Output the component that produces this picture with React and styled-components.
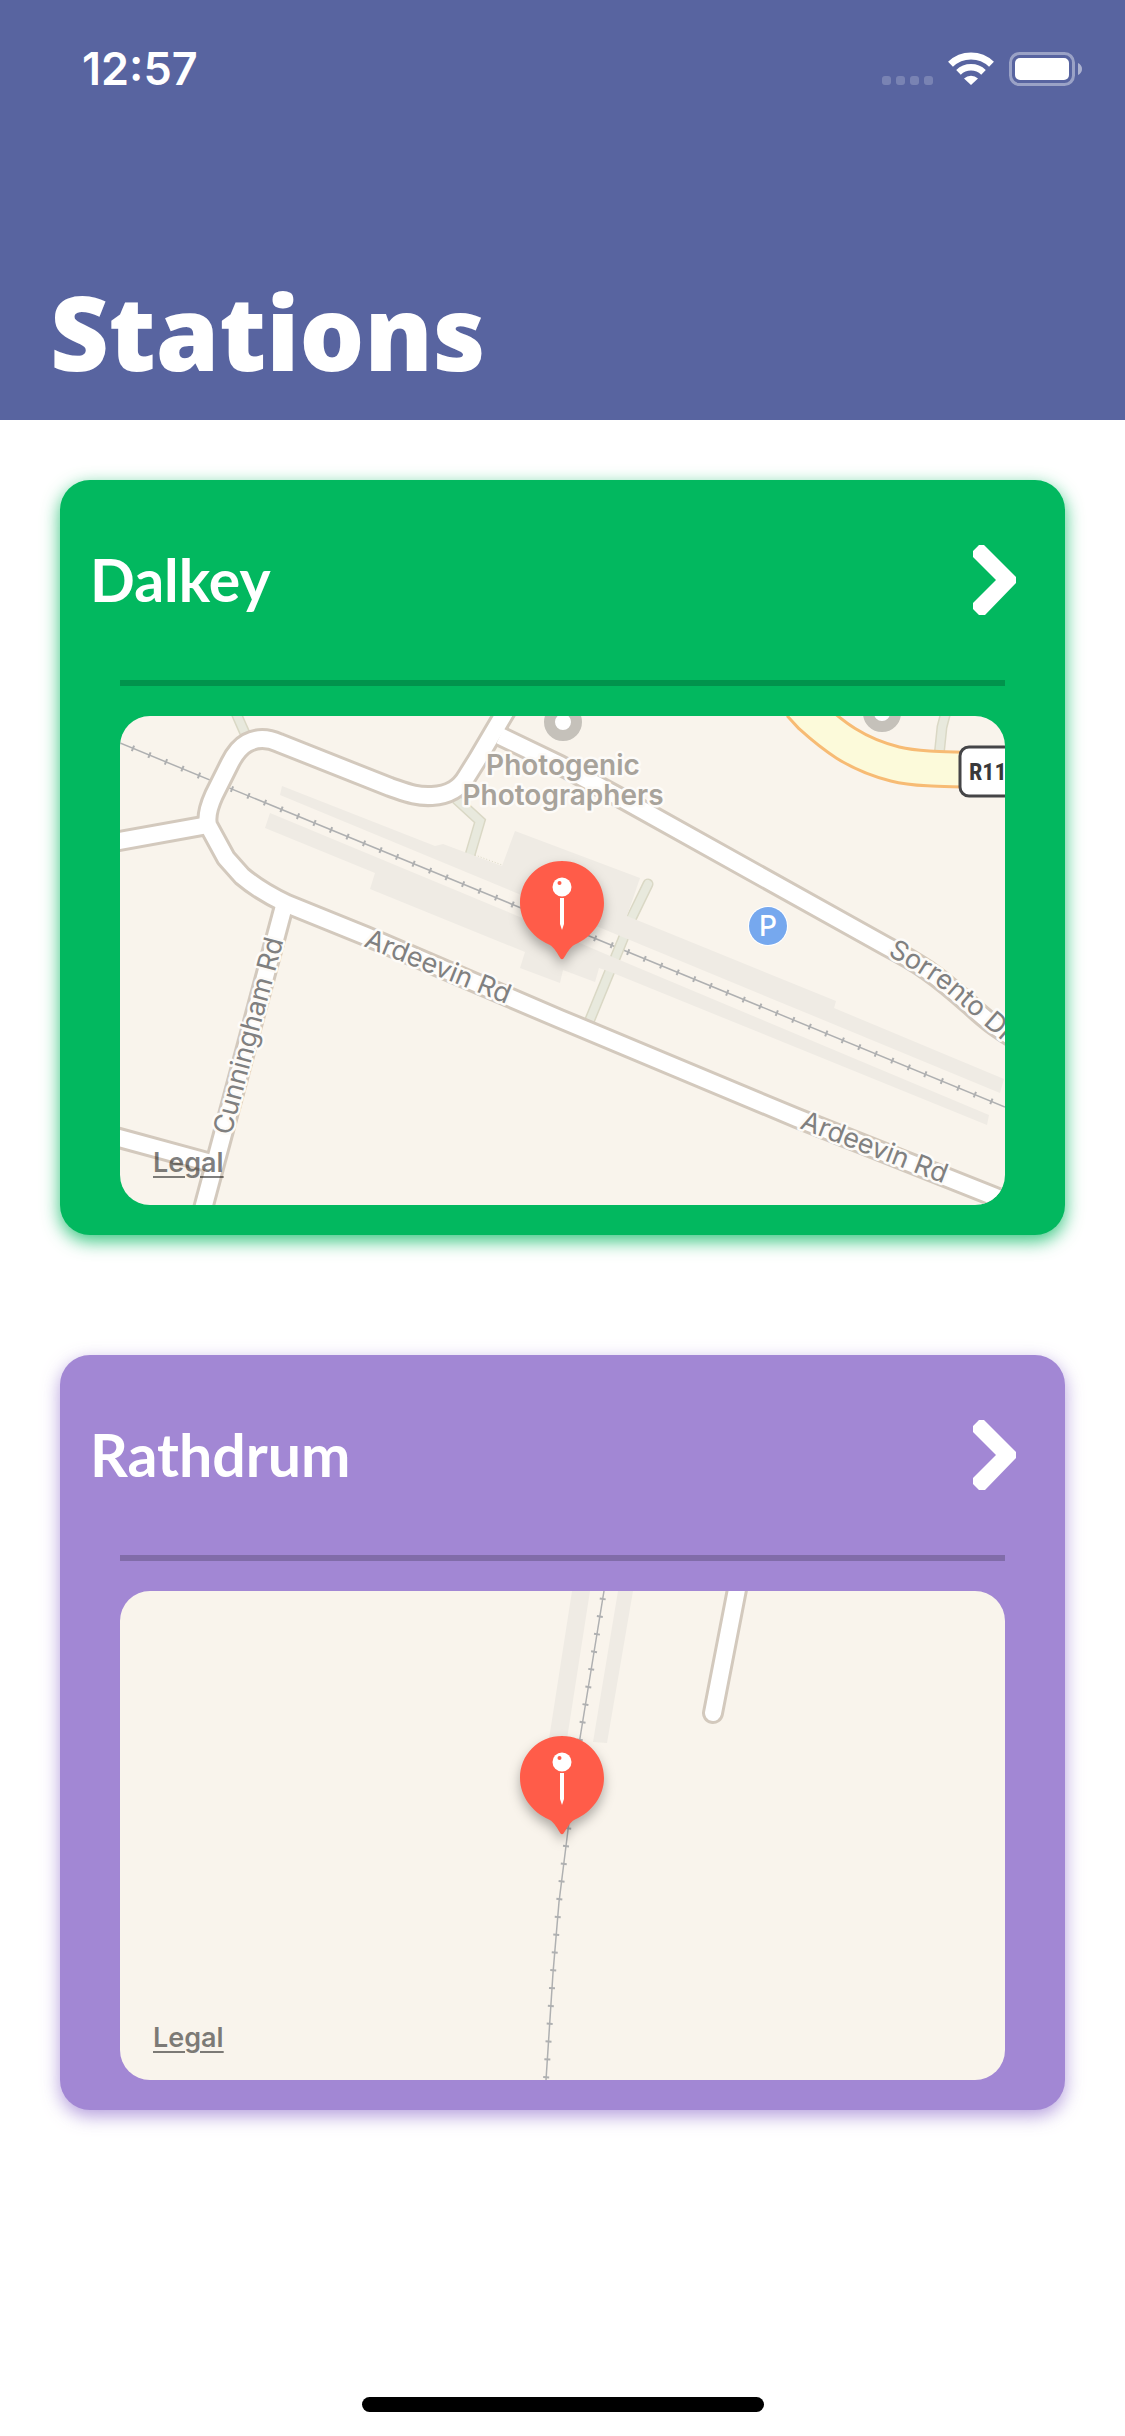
import React from "react";
import styled, { createGlobalStyle } from "styled-components";

const GlobalStyle = createGlobalStyle`
  *, *::before, *::after { box-sizing: border-box; }
  body { margin: 0; background: #fff; }
`;

const display = `Lato, "Open Sans", sans-serif`;
const ui = `Inter, Roboto, sans-serif`;

const Page = styled.div`
  display: flex;
  flex-direction: column;
  min-height: 100vh;
  background: #fff;
  font-family: ${ui};
`;

const Header = styled.header`
  display: flex;
  flex-direction: column;
  justify-content: space-between;
  height: 420px;
  padding: 39px 43px 28px 50px;
  background: #5864a0;
  color: #fff;
`;

const StatusBar = styled.div`
  display: flex;
  align-items: center;
  justify-content: space-between;
  padding-left: 32px;
`;

const Time = styled.time`
  font-size: 45px;
  line-height: 60px;
  font-weight: 600;
`;

const StatusIcons = styled.div`
  display: flex;
  align-items: center;
  gap: 15px;
`;

const Title = styled.h1`
  margin: 0;
  font-family: "Open Sans", Lato, sans-serif;
  font-size: 102px;
  line-height: 120px;
  font-weight: 800;
`;

const StationList = styled.main`
  display: flex;
  flex-direction: column;
  gap: 120px;
  padding: 60px;
`;

const Card = styled.article`
  padding-bottom: 30px;
  border-radius: 30px;
  background: rgb(${(p) => p.$tone});
  box-shadow: 0 6px 18px rgba(${(p) => p.$tone}, 0.8);
`;

const CardLink = styled.a`
  display: flex;
  align-items: center;
  justify-content: space-between;
  height: 200px;
  padding: 0 49px 0 30px;
  color: #fff;
  text-decoration: none;
`;

const StationName = styled.h2`
  margin: 0;
  font-family: ${display};
  font-size: 59px;
  line-height: 72px;
  font-weight: 700;
`;

const Divider = styled.hr`
  height: 6px;
  margin: 0 60px 30px;
  border: 0;
  background: rgba(0, 0, 0, 0.2);
`;

const MapFrame = styled.div`
  position: relative;
  margin: 0 60px;
  border-radius: 30px;
  overflow: hidden;
  background: #f9f4ec;
`;

const MapCanvas = styled.svg`
  display: block;
  width: 100%;
  height: auto;
  font-family: ${ui};

  .area { fill: #efebe4; }
  .casing { fill: none; stroke: #d3c9bd; stroke-width: 22; stroke-linejoin: round; }
  .road { fill: none; stroke: #fff; stroke-width: 16; stroke-linejoin: round; }
  .casing.end, .road.end { stroke-linecap: round; }
  .pathEdge { fill: none; stroke: #dad8c5; stroke-width: 11; }
  .path { fill: none; stroke: #e8e9dd; stroke-width: 8; }
  .rail { fill: none; stroke: #afb0b1; stroke-width: 1.500; }
  .ties { fill: none; stroke: #afb0b1; stroke-width: 6; stroke-dasharray: 2 15.85; }
  .label {
    fill: #808080;
    stroke: #fdfbf8;
    stroke-width: 5;
    stroke-linejoin: round;
    paint-order: stroke;
    font-size: 27px;
  }
  .place { fill: #a8a39b; font-size: 28px; font-weight: 600; text-anchor: middle; }
`;

const LegalLink = styled.a`
  position: absolute;
  left: 33px;
  bottom: 26px;
  color: rgba(0, 0, 0, 0.5);
  font-size: 27px;
  line-height: 32px;
  font-weight: 600;
  text-underline-offset: 4px;
`;

const Footer = styled.footer`
  display: flex;
  justify-content: center;
  margin-top: auto;
  padding-bottom: 24px;
`;

const HomeIndicator = styled.div`
  width: 402px;
  height: 15px;
  border-radius: 8px;
  background: #000;
`;

function SignalDots() {
  return (
    <svg width="51" height="34" viewBox="0 0 51 34" fill="#fff" fillOpacity="0.2" aria-hidden="true">
      {[0, 14, 28, 42].map((x) => (
        <rect key={x} x={x} y="24" width="9" height="9" rx="3" />
      ))}
    </svg>
  );
}

function WifiIcon() {
  return (
    <svg width="46" height="34" viewBox="0 0 46 34" aria-hidden="true">
      <g fill="none" stroke="#fff">
        <path d="M2.5 12.3a29.5 29.5 0 0 1 41 0" strokeWidth="7" />
        <path d="M10.5 20.3a18 18 0 0 1 25 0" strokeWidth="6.6" />
      </g>
      <path d="M16 26.4a10.5 10.5 0 0 1 14 0L23 33z" fill="#fff" />
    </svg>
  );
}

function BatteryIcon() {
  return (
    <svg width="73" height="34" viewBox="0 0 73 34" fill="#fff" aria-hidden="true">
      <rect x="1.5" y="1.5" width="63" height="31" rx="9" fill="none" stroke="#fff" strokeOpacity="0.4" strokeWidth="3" />
      <rect x="6" y="6" width="54" height="22" rx="5" />
      <path d="M69 11v12c2.500-1 4-3.400 4-6s-1.500-5-4-6z" fillOpacity="0.5" />
    </svg>
  );
}

function Chevron() {
  return (
    <svg width="43" height="70" viewBox="0 0 43 70" aria-hidden="true">
      <path
        d="M6 0h5l32 32v6L12 70H6L0 64v-6l23-23L0 12V6z"
        fill="#fff"
      />
    </svg>
  );
}

function MapPin() {
  return (
    <g>
      <path
        d="M442 145c-23.500 0-42 18.500-42 42 0 18 12 34 29 41.500 6 3 8.500 10 11.500 14q1.500 1.500 3 0c3-4 5.500-11 11.500-14 17-7.500 29-23.500 29-41.500 0-23.500-18.500-42-42-42z"
        fill="#ff5c49"
        style={{ filter: "drop-shadow(0 6px 6px rgba(0,0,0,0.3))" }}
      />
      <circle cx="442" cy="171" r="9.500" fill="#fff" />
      <circle cx="439.500" cy="167" r="2" fill="#ff5c49" />
      <path d="M440 182h4v26l-2 6-2-6z" fill="#fff" />
    </g>
  );
}

const dalkeyRoads = [
  "M390-12L357 44 347 60C340 72 330 79 312 80 296 81 285 76 270 71L159 27C148 22 138 21 127 27 118 32 113 41 110 47L94 79C89 90 86 100 88 109L106 142 122 160C135 171 150 180 167 188L246 220 440 303 677 402 873 480 903 492",
  "M88 109L-12 127",
  "M164 190L80 504",
  "M91 447L-12 419",
  "M380 20L440 49 497 80 766 230C800 248 815 258 850 289 865 303 875 311 900 326",
];

function Rail({ d, offset }) {
  return (
    <>
      <path className="rail" d={d} />
      <path className="ties" d={d} strokeDashoffset={offset} />
    </>
  );
}

function FootPath({ d, round }) {
  const cap = round ? "round" : "butt";
  return (
    <>
      <path className="pathEdge" d={d} strokeLinecap={cap} />
      <path className="path" d={d} strokeLinecap={cap} />
    </>
  );
}

function DalkeyMap() {
  return (
    <MapCanvas viewBox="0 0 885 489" role="img" aria-label="Map of Dalkey station">
      <FootPath d="M112-12L127 22" />
      <FootPath d="M336 83L360 105 350 139" />
      <FootPath d="M828-12L822 11 819 40" />
      <path d="M355 139L382 149" stroke="#dad8c5" strokeDasharray="1 2" />
      <Rail d="M0 27L885 391" offset="-13" />
      <FootPath d="M528 168L512 201 469 306" round />
      <path
        className="area"
        d="M162 70L315 130 323 128 382 150 395 115 520 162 507 200 716 285 714 292 884 363 880 377 505 222 160 79z"
      />
      <path
        className="area"
        d="M150 97L400 201 483 237 869 399 867 409 493 257 479 252 475 266 443 254 440 267 400 252 405 236 250 173 255 157 145 112z"
      />
      {dalkeyRoads.map((d) => <path key={d} className="casing" d={d} />)}
      {dalkeyRoads.map((d) => <path key={d} className="road" d={d} />)}
      <g fill="none">
        <path d="M680-12L691 0C712 19 735 38 775 48 795 53 815 53 900 55" stroke="#f7bb74" strokeWidth="38" />
        <path d="M680-12L691 0C712 19 735 38 775 48 795 53 815 53 900 55" stroke="#fcfada" strokeWidth="32" />
      </g>
      <circle cx="443" cy="6" r="13.500" fill="#fff" stroke="#c5c1ba" strokeWidth="11" />
      <circle cx="762" cy="-3" r="13.500" fill="#fff" stroke="#c5c1ba" strokeWidth="11" />

      <rect x="840" y="31" width="80" height="49" rx="9" fill="#fff" stroke="#454547" strokeWidth="3" />
      <text
        x="849"
        y="64"
        fill="#38383a"
        fontFamily='"Liberation Sans Narrow", "Roboto Condensed", Roboto, sans-serif'
        fontSize="24"
        fontWeight="700"
      >
        R11
      </text>

      <circle cx="648" cy="210" r="20" fill="#fff" />
      <circle cx="648" cy="210" r="19" fill="#76a8ee" />
      <text x="648" y="220" fill="#fff" fontSize="28" fontWeight="500" textAnchor="middle">P</text>

      <text className="label place" x="443" y="59">Photogenic</text>
      <text className="label place" x="443" y="89">Photographers</text>
      <text className="label" transform="translate(243 230) rotate(22)">Ardeevin Rd</text>
      <text className="label" transform="translate(679 412) rotate(21)">Ardeevin Rd</text>
      <text className="label" transform="translate(111 420) rotate(-75)">Cunningham Rd</text>
      <path id="sorrento" d="M767 239C800 257 820 270 835 284L930 366" fill="none" />
      <text className="label"><textPath href="#sorrento">Sorrento Dr</textPath></text>
      <MapPin />
    </MapCanvas>
  );
}

function RathdrumMap() {
  const rail = "M484 0L460 147 448 239 439 311 433 382 426 489";
  return (
    <MapCanvas viewBox="0 0 885 489" role="img" aria-label="Map of Rathdrum station">
      <path className="area" d="M452 0H470L447 148H429z" />
      <path className="area" d="M498 0H513L487 152 473 151z" />
      <Rail d={rail} offset="-7" />
      <path className="casing end" d="M619-12L593 122" />
      <path className="road end" d="M619-12L593 122" />
      <MapPin />
    </MapCanvas>
  );
}

const stations = [
  { id: "dalkey", name: "Dalkey", tone: "2, 184, 95", Map: DalkeyMap },
  { id: "rathdrum", name: "Rathdrum", tone: "162, 135, 212", Map: RathdrumMap },
];

function StationCard({ station }) {
  const { id, name, tone, Map } = station;
  return (
    <Card $tone={tone}>
      <CardLink href={`#${id}`}>
        <StationName>{name}</StationName>
        <Chevron />
      </CardLink>
      <Divider />
      <MapFrame>
        <Map />
        <LegalLink href="#legal">Legal</LegalLink>
      </MapFrame>
    </Card>
  );
}

export default function App() {
  return (
    <Page>
      <GlobalStyle />
      <Header>
        <StatusBar>
          <Time>12:57</Time>
          <StatusIcons>
            <SignalDots />
            <WifiIcon />
            <BatteryIcon />
          </StatusIcons>
        </StatusBar>
        <Title>Stations</Title>
      </Header>
      <StationList>
        {stations.map((station) => (
          <StationCard key={station.id} station={station} />
        ))}
      </StationList>
      <Footer>
        <HomeIndicator />
      </Footer>
    </Page>
  );
}
